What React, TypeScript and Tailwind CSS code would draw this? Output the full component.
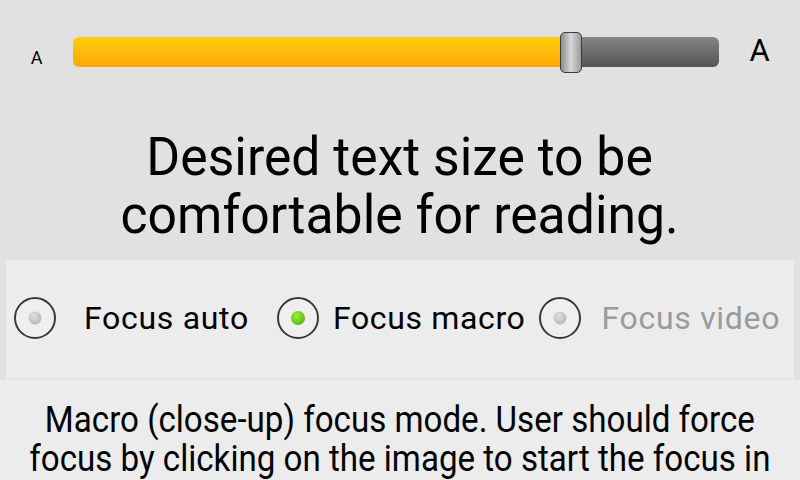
import React from "react";

function Radio({ checked }: { checked?: boolean }) {
  return (
    <svg width="46" height="46" viewBox="0 0 46 46" className="shrink-0">
      <defs>
        <radialGradient id="g1" cx="0.4" cy="0.35" r="0.7">
          <stop offset="0" stopColor="#9ef03a" />
          <stop offset="1" stopColor="#4fb70e" />
        </radialGradient>
        <radialGradient id="g2" cx="0.4" cy="0.35" r="0.7">
          <stop offset="0" stopColor="#e0e0e0" />
          <stop offset="1" stopColor="#b5b5b5" />
        </radialGradient>
      </defs>
      <circle cx="23" cy="23" r="20" fill="#efefef" stroke="#3a3a3a" strokeWidth="2" />
      <circle cx="23" cy="23" r={checked ? 7 : 6.5} fill={checked ? "url(#g1)" : "url(#g2)"} />
    </svg>
  );
}

export default function App() {
  return (
    <div
      className="w-[800px] h-[480px] overflow-hidden bg-[#e1e1e1] flex flex-col"
      style={{ fontFamily: "Roboto, 'Noto Sans', sans-serif" }}
    >
      <div className="h-[104px] flex items-center">
        <div className="w-[73px] flex justify-center text-[18px] text-black pt-[10px]">A</div>
        <div className="relative w-[646px] h-[30px] rounded-[6px] overflow-visible flex">
          <div className="h-full w-[492px] rounded-l-[6px] bg-gradient-to-b from-[#ffcd0c] to-[#ffa606]" />
          <div className="h-full flex-1 rounded-r-[6px] bg-gradient-to-b from-[#858585] to-[#545454]" />
          <div className="absolute left-[487px] top-[-5px] w-[22px] h-[41px] rounded-[5px] border border-[#3c3c3c] bg-gradient-to-r from-[#8e8e8e] via-[#d8d8d8] to-[#9a9a9a]" />
        </div>
        <div className="flex-1 flex justify-center text-[31px] text-black pb-[2px]">A</div>
      </div>
      <div className="h-[156px] flex items-center justify-center text-center text-[54px] leading-[58px] text-black pt-[7px]">
        <div className="scale-x-[0.957] whitespace-nowrap">
          Desired text size to be
          <br />
          comfortable for reading.
        </div>
      </div>
      <div className="mx-[6px] h-[118px] bg-[#ececec] flex items-center pb-[2px]">
        <div className="flex items-center pl-[6px]">
          <Radio />
          <span className="ml-[26px] text-[32px] tracking-[0.7px] text-black">Focus auto</span>
        </div>
        <div className="flex items-center ml-[26px]">
          <Radio checked />
          <span className="ml-[12px] text-[32px] tracking-[0.65px] text-black">Focus macro</span>
        </div>
        <div className="flex items-center ml-[11px]">
          <Radio />
          <span className="ml-[19px] text-[32px] tracking-[0.7px] text-[#9a9a9a]">Focus video</span>
        </div>
      </div>
      <div className="h-[2px] bg-[#e4e4e4]" />
      <div className="flex-1 bg-[#ececec] flex justify-center pt-[21px]">
        <div className="text-center text-[36px] leading-[39px] text-black whitespace-nowrap scale-x-[0.92]">
          Macro (close-up) focus mode. User should force
          <br />
          focus by clicking on the image to start the focus in
        </div>
      </div>
    </div>
  );
}
